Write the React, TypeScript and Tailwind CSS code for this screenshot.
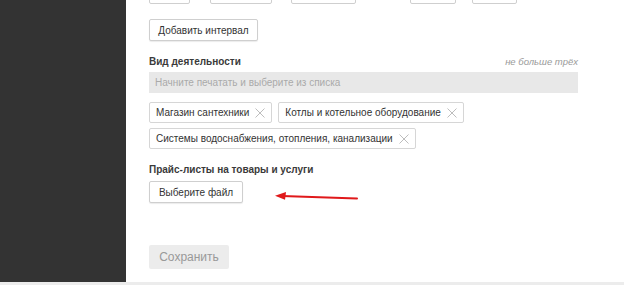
import React from "react";

// Profile edit form fragment: dark side rail, activity tags, price-list upload.

const TAGS_ROW1 = ["Магазин сантехники", "Котлы и котельное оборудование"];
const TAGS_ROW2 = ["Системы водоснабжения, отопления, канализации"];

function Cross() {
  return (
    <svg width="10" height="10" viewBox="0 0 10 10" className="shrink-0" aria-hidden>
      <path d="M0.5 0.5 L9.5 9.5 M9.5 0.5 L0.5 9.5" stroke="#bdbdbd" strokeWidth="1" />
    </svg>
  );
}

function Tag({ label }: { label: string }) {
  return (
    <span className="flex h-[21px] items-center gap-[6px] rounded-[2px] border border-[#d6d6d6] bg-white pl-[6px] pr-[6px] text-[10px] text-[#333]">
      {label}
      <Cross />
    </span>
  );
}

function Btn({ children, w }: { children: React.ReactNode; w: string }) {
  return (
    <button
      className={`flex h-[22px] ${w} items-center justify-center rounded-[2px] border border-[#cfcfcf] bg-white text-[10px] text-[#333] shadow-[0_1px_1px_rgba(0,0,0,0.08)]`}
    >
      {children}
    </button>
  );
}

export default function App() {
  return (
    <div
      className="flex h-[285px] w-[624px] flex-col overflow-hidden bg-white"
      style={{ fontFamily: '"Liberation Sans", Arial, sans-serif' }}
    >
      <div className="flex min-h-0 flex-1">
        <aside className="w-[126px] shrink-0 bg-[#333333]" />
        <main className="flex flex-1 flex-col pl-[23px]">
          {/* clipped row of interval inputs */}
          <div className="flex h-[4px] items-end gap-0 overflow-hidden">
            <span className="h-[22px] w-[41px] shrink-0 rounded-[2px] border border-[#cfcfcf]" />
            <span className="ml-[20px] h-[22px] w-[62px] shrink-0 rounded-[2px] border border-[#cfcfcf]" />
            <span className="ml-[19px] h-[22px] w-[65px] shrink-0 rounded-[2px] border border-[#cfcfcf]" />
            <span className="ml-[54px] h-[22px] w-[46px] shrink-0 rounded-[2px] border border-[#cfcfcf]" />
            <span className="ml-[16px] h-[22px] w-[45px] shrink-0 rounded-[2px] border border-[#cfcfcf]" />
          </div>

          <div className="mt-[15px]">
            <Btn w="w-[109px]">Добавить интервал</Btn>
          </div>

          <div className="mt-[13px] flex w-[429px] items-baseline justify-between leading-[16px]">
            <span className="text-[10px] font-bold text-[#3a3a3a]">Вид деятельности</span>
            <span className="text-[9.5px] italic text-[#9a9a9a]">не больше трёх</span>
          </div>

          <div className="mt-[2px] flex h-[21px] w-[429px] items-center bg-[#e8e8e8] px-[6px] text-[10px] text-[#aaa]">
            Начните печатать и выберите из списка
          </div>

          <div className="mt-[9px] flex flex-col gap-[5px]">
            <div className="flex gap-[6px]">
              {TAGS_ROW1.map((t) => (
                <Tag key={t} label={t} />
              ))}
            </div>
            <div className="flex gap-[6px]">
              {TAGS_ROW2.map((t) => (
                <Tag key={t} label={t} />
              ))}
            </div>
          </div>

          <div className="mt-[13px] text-[10px] font-bold leading-[16px] text-[#3a3a3a]">
            Прайс-листы на товары и услуги
          </div>

          <div className="relative mt-[3px]">
            <Btn w="w-[94px]">Выберите файл</Btn>
            <svg
              className="absolute left-[126px] top-[10px]"
              width="84"
              height="10"
              viewBox="0 0 84 10"
              aria-hidden
            >
              <path d="M7 5 L82 7.5" stroke="#e0191b" strokeWidth="2" strokeLinecap="round" />
              <path d="M0 4.8 L11 1 L10 8.8 Z" fill="#e0191b" />
            </svg>
          </div>

          <div className="mt-[42px]">
            <button className="flex h-[24px] w-[80px] items-center justify-center rounded-[2px] bg-[#ececec] text-[12px] text-[#999]">
              Сохранить
            </button>
          </div>
        </main>
      </div>
      <div className="h-[3px] shrink-0 bg-[#ececec]" />
    </div>
  );
}
